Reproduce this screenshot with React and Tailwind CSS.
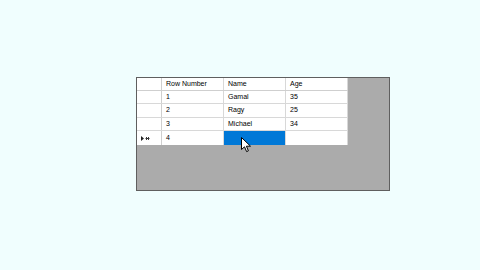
import React from 'react'

const rows = [
  { n: '1', name: 'Gamal', age: '35', h: 'h-[13px]' },
  { n: '2', name: 'Ragy', age: '25', h: 'h-[14px]' },
  { n: '3', name: 'Michael', age: '34', h: 'h-[13px]' },
]

function Cell({ children, className = '' }) {
  return (
    <div className={`w-[62px] h-full border-r border-[#d8d8d8] pl-[4px] flex items-center ${className}`}>
      {children}
    </div>
  )
}

function NewRowGlyph() {
  return (
    <svg width="9" height="5" viewBox="0 0 9 5">
      <path d="M0 0 L3 2.5 L0 5 Z" fill="#222" />
      <path d="M5 1 L8 4 M8 1 L5 4 M4.5 2.5 L8.5 2.5" stroke="#222" strokeWidth="0.9" />
    </svg>
  )
}

function Cursor() {
  return (
    <svg className="absolute left-[241px] top-[137px]" width="11" height="16" viewBox="0 0 11 16">
      <path d="M0.5 0.5 L0.5 12.5 L3.5 9.8 L5.6 14.6 L7.4 13.8 L5.4 9.2 L9.5 9.2 Z" fill="#fff" stroke="#000" strokeWidth="1" strokeLinejoin="round" />
    </svg>
  )
}

export default function App() {
  return (
    <div className="relative w-[480px] h-[270px] bg-[#f0fefe] overflow-hidden" style={{ fontFamily: '"Liberation Sans", "Open Sans", sans-serif' }}>
      <div className="pt-[77px] pl-[136px]">
        <div className="w-[254px] h-[114px] border border-[#5f5f5f] bg-[#ababab] text-[7px] text-black">
          <div className="w-[211px]">
            <div className="flex h-[13px] bg-white border-b border-[#cfcfcf]">
              <div className="w-[25px] h-full border-r border-[#cfcfcf]" />
              <Cell className="pl-[4px]">Row Number</Cell>
              <Cell>Name</Cell>
              <Cell>Age</Cell>
            </div>
            {rows.map((r) => (
              <div key={r.n} className={`flex ${r.h} bg-white border-b border-[#d8d8d8]`}>
                <div className="w-[25px] h-full border-r border-[#cfcfcf]" />
                <Cell>{r.n}</Cell>
                <Cell>{r.name}</Cell>
                <Cell>{r.age}</Cell>
              </div>
            ))}
            <div className="flex h-[14px] bg-white">
              <div className="w-[25px] h-full border-r border-[#cfcfcf] flex items-center pl-[4px]">
                <NewRowGlyph />
              </div>
              <Cell>4</Cell>
              <Cell className="bg-[#0078d7]" />
              <Cell />
            </div>
          </div>
        </div>
      </div>
      <Cursor />
    </div>
  )
}
